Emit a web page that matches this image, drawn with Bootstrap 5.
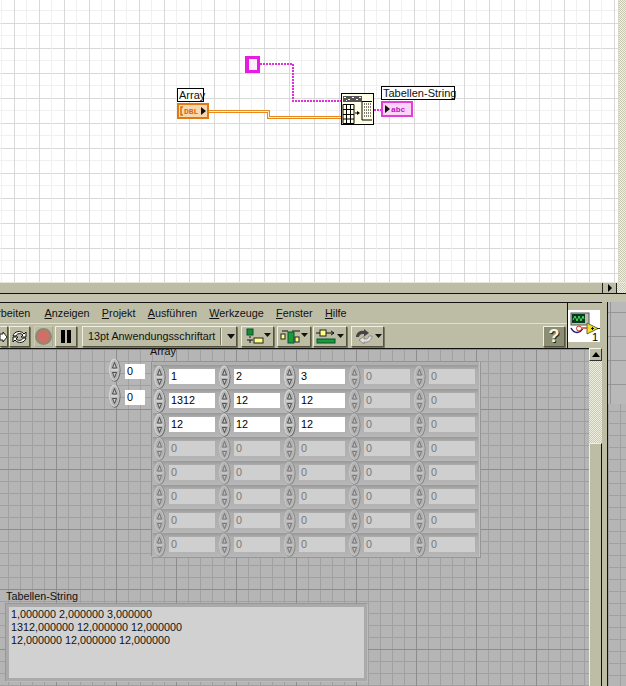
<!DOCTYPE html>
<html lang="de">
<head>
<meta charset="utf-8">
<title>LabVIEW</title>
<link rel="stylesheet" href="https://cdn.jsdelivr.net/npm/bootstrap@5.3.0/dist/css/bootstrap.min.css">
<style>
html,body{margin:0;width:626px;height:686px;overflow:hidden;background:#bdbda6;}
body{font:10.8px/13px "Liberation Sans",Arial,sans-serif;color:#111;}
.diagram-row{height:282px;}
.canvas{position:relative;overflow:hidden;background-color:#fff;
 background-image:linear-gradient(90deg,#d9d9d9 1px,transparent 1px,transparent 12px,#f0f0f0 12px,#f0f0f0 13px,transparent 13px),linear-gradient(#d9d9d9 1px,transparent 1px,transparent 12px,#f0f0f0 12px,#f0f0f0 13px,transparent 13px);
 background-size:25px 25px;background-position:14px 23px;}
.check{background-color:#e8e8d6;background-image:repeating-conic-gradient(#c9c9b2 0 25%,#efefe0 0 50%);background-size:2px 2px;}
.vtrack{width:8px;border-left:1px solid #d8d8c8;}
.hbar{height:12px;background:#bdbda6;border-top:1px solid #e6e6d8;border-bottom:1px solid #111;}
.hbar-track{width:603px;border-right:1px solid #222;}
.hbar-btn{width:14px;border-right:1px solid #222;}
.hgrip{width:9px;}
.sep{height:8px;background:#c4c4ae;}
.win{height:384px;}
.main-col{width:602px;border-top:1px solid #111;}
.head-left{width:568px;border-right:1px solid #111;}
.menu-row{height:21px;gap:12.3px;overflow:hidden;border-bottom:1px solid #e0e0cc;white-space:nowrap;background:#bdbda6;}
.menu-first{margin-left:-22px;margin-right:2px;}
.tool-row{height:24px;background:#bdbda6;padding:2px 2px 0 0;}
.head{border-bottom:1px solid #111;height:46px;}
.tb{height:21px;padding:0;border:1px solid;border-color:#f0f0e2 #55553f #55553f #f0f0e2;border-radius:1px;background:#bdbda6;display:flex;align-items:center;justify-content:center;box-shadow:1px 1px 0 #77775f;}
.gap1{margin-left:1px;}
.gap2{margin-left:2px;}
.gap3{margin-left:3px;}
.gap5{margin-left:5px;}
.w8{width:8px;border-left:0;}
.w21{width:21px;}
.w19{width:19px;box-shadow:none;border-color:#cfcfb8 #a8a890 #a8a890 #cfcfb8;}
.w22{width:22px;}
.w33{width:33px;}
.w34{width:34px;}
.ring{width:155px;justify-content:flex-start;padding-left:5px;white-space:nowrap;}
.ring-sep{margin-left:5px;width:1px;height:17px;background:#77775f;box-shadow:1px 0 0 #e8e8d8;}
.ring-arrow{margin-left:6px;}
.help{background:#8d8d74;font:bold 18px/19px "Liberation Sans",sans-serif;color:#f8f8d8;text-shadow:1px 1px 0 #222;width:22px;}
.icon-area{width:33px;padding:7px 0 0 0;background:#bdbda6;}
.vi-icon{display:block;background:#fff;}
.panel{position:relative;width:589px;height:337px;overflow:hidden;background-color:#b5b5b5;
 background-image:linear-gradient(90deg,#8c8c8c 1px,transparent 1px),linear-gradient(#8c8c8c 1px,transparent 1px),linear-gradient(90deg,#a0a0a0 1px,transparent 1px),linear-gradient(#a0a0a0 1px,transparent 1px);
 background-size:60px 60px,60px 60px,12px 12px,12px 12px;background-position:56px 0,0 0,8px 0,0 0;}
.pscroll{width:13px;margin-top:-1px;}
.up-btn{height:13px;background:#bdbda6;border:1px solid;border-color:#f4f4e8 #333 #333 #f4f4e8;display:flex;align-items:center;justify-content:center;}
.ptrack{height:82px;}
.pthumb{height:243px;background:#bdbda6;border-left:1px solid #efefe0;border-right:1px solid #111;border-top:1px solid #efefe0;}
.tan-strip{width:6px;background:#bdbda6;border-right:1px solid #111;}
.right-win{width:18px;background-color:#b5b5b5;
 background-image:linear-gradient(90deg,#a0a0a0 1px,transparent 1px),linear-gradient(#a0a0a0 1px,transparent 1px);background-size:12px 12px;background-position:0 1px;}
.right-top{height:102px;background-color:#b9b9b9;background-image:linear-gradient(#969696 1px,transparent 1px),linear-gradient(90deg,#969696 1px,transparent 1px);background-size:24px 24px;background-position:0 10px,2px 0;}
/* block diagram nodes */
.wires{position:absolute;left:0;top:0;}
.dlabel{position:absolute;background:#fff;border:1px solid #000;font-size:11px;line-height:12px;padding:0 1px;white-space:nowrap;}
.dl-array{left:177px;top:88px;width:27px;height:14px;}
.dl-str{left:381px;top:86px;width:74px;height:14px;}
.dnode{position:absolute;display:block;}
.dn-arr{left:177px;top:103px;}
.dn-const{left:245px;top:56px;width:15px;height:17px;border:3px solid #e81ce0;border-left-width:4px;background:#fdf0fc;}
.dn-fmt{left:341px;top:93px;}
.dn-str{left:381px;top:101px;}
.tlabel{font:bold 8px "Liberation Mono",monospace;}
/* front panel */
.plabel{position:absolute;line-height:13px;white-space:nowrap;}
.pl-array{left:150px;top:-4px;}
.idx{position:absolute;left:108px;top:9px;}
.idx-row{height:26px;}
.field{width:46px;height:15px;background:#fff;line-height:15px;padding-left:2px;margin:4px 0 0 3px;font-size:10.8px;color:#000;}
.idx-field{width:20px;margin:6px 0 0 4px;}
.off .field{background:#cfcfcf;color:#777;}
.off .spin{opacity:.6;}
.spin{display:block;width:13px;height:24px;flex:none;}
.arr-frame{position:absolute;left:151px;top:12px;width:329px;height:196px;padding:3px 0 0 1px;background:#b0b0b0;border:1px solid;border-color:#939393 #c2c2c2 #c2c2c2 #939393;display:grid;grid-template-columns:repeat(5,65px);grid-auto-rows:24px;box-shadow:1px 1px 0 #969696;}
.ccell{display:flex;background:linear-gradient(#989898,#adadad 4px,#b3b3b3 20px,#b8b8b8);}
.pl-str{left:6px;top:241px;}
.str-box{position:absolute;left:5px;top:254px;width:363px;height:79px;padding:3px;background:#aaa;border:1px solid;border-color:#979797 #bcbcbc #bcbcbc #979797;}
.str-in{height:100%;background:#d1d1d1;padding:1px 0 0 2px;line-height:13px;color:#111;white-space:pre;}
</style>
</head>
<body>
<svg width="0" height="0" class="position-absolute">
 <defs>
  <symbol id="s" viewBox="0 0 13 24">
   <ellipse cx="6.8" cy="12.3" rx="5.7" ry="11.5" fill="#666"/>
   <ellipse cx="6.2" cy="11.8" rx="5.4" ry="11.2" fill="#d2d2d2"/>
   <ellipse cx="6.6" cy="12" rx="4.2" ry="10" fill="#b4b4b4"/>
   <path d="M3 12h7" stroke="#eee" stroke-width="1"/>
   <path d="M6.5 4.5 4.5 10h4zM6.5 19.500 4.500 14.500h4z" fill="#c8c8c8" stroke="#333" stroke-width=".8"/>
  </symbol>
 </defs>
</svg>

<div class="diagram-row d-flex">
 <div class="canvas flex-grow-1">
  <svg class="wires" width="618" height="282">
   <path d="M260 64H293V101H342" fill="none" stroke="#e030d8" stroke-width="2" stroke-dasharray="2 1"/>
   <path d="M374 110H381" fill="none" stroke="#e030d8" stroke-width="2" stroke-dasharray="2 1"/>
   <path d="M209 111.500H268.500V117.500H342" fill="none" stroke="#e8891e" stroke-width="3"/>
   <path d="M209 111.500H268.500V117.500H342" fill="none" stroke="#fff3e0" stroke-width="1"/>
  </svg>
  <div class="dlabel dl-array">Array</div>
  <svg class="dnode dn-arr" width="32" height="16">
   <rect x="1" y="1" width="30" height="14" fill="#f8d8ae" stroke="#e07a14" stroke-width="2"/>
   <path d="M6 4H4V12H6" fill="none" stroke="#d86a08" stroke-width="1.500"/>
   <text class="tlabel" x="7" y="11" fill="#d86a08">DBL</text>
   <path d="M24 4 29 8 24 12Z" fill="#111"/>
  </svg>
  <div class="dnode dn-const"></div>
  <svg class="dnode dn-fmt" width="33" height="33">
   <rect x=".5" y=".5" width="32" height="31" fill="#ffffe8" stroke="#000"/>
   <rect x="2" y="3" width="19" height="6" fill="#555"/>
   <path d="M3 4h2v1h-2zM7 6h2v1h-2zM11 4h2v1h-2zM15 6h2v1h-2zM5 7h1v1h-1zM18 4h2v1h-2z" fill="#fff"/>
   <path d="M2 11.500H13V30.500H2ZM5.500 11.500V30.500M9.500 11.500V30.500M2 16.500H13M2 21.500H13M2 26H13" fill="none" stroke="#000"/>
   <path d="M14 20h3" stroke="#000"/><path d="M16 18 19 20 16 22Z" fill="#000"/>
   <path d="M21 8.500H31M21 8.500V27H31" fill="none" stroke="#000"/>
   <path d="M23 11h7M23 14h7M23 17h7M23 20h7M23 23h7" stroke="#000" stroke-dasharray="1 1"/>
  </svg>
  <div class="dlabel dl-str">Tabellen-String</div>
  <svg class="dnode dn-str" width="32" height="16">
   <rect x="1" y="1" width="30" height="14" fill="#fcd4f8" stroke="#e040d8" stroke-width="2"/>
   <path d="M4 4 9 8 4 12Z" fill="#111"/>
   <text class="tlabel" x="10" y="11" fill="#c010b8">abc</text>
  </svg>
 </div>
 <div class="vtrack check"></div>
</div>

<div class="hbar d-flex">
 <div class="hbar-track"></div>
 <div class="hbar-btn d-flex align-items-center justify-content-center"><svg width="6" height="8"><path d="M1 0 5 4 1 8Z" fill="#000"/></svg></div>
 <div class="hgrip check"></div>
</div>
<div class="sep"></div>

<div class="win d-flex">
 <div class="main-col">
  <div class="head d-flex">
   <div class="head-left">
    <div class="menu-row d-flex align-items-center">
     <span class="menu-first">Bearbeiten</span>
     <span><u>A</u>nzeigen</span>
     <span><u>P</u>rojekt</span>
     <span><u>A</u>usführen</span>
     <span><u>W</u>erkzeuge</span>
     <span><u>F</u>enster</span>
     <span><u>H</u>ilfe</span>
    </div>
    <div class="tool-row d-flex">
     <div class="tb w8"><svg width="7" height="10"><path d="M0 2H3V0L7 5 3 10V8H0Z" fill="#fff" stroke="#222"/></svg></div>
     <div class="tb w21 gap1"><svg width="17" height="16"><path d="M2 7C3 2 10 1 13 5L15 3V8H10L12 6C10 4 6 4 5 7ZM15 9C14 14 7 15 4 11L2 13V8H7L5 10C7 12 11 12 12 9Z" fill="#fff" stroke="#111"/></svg></div>
     <div class="tb w19 ms-1"><svg width="17" height="17"><circle cx="8.500" cy="8.500" r="7.500" fill="#d07064" stroke="#8a8a78" stroke-width="2"/></svg></div>
     <div class="tb w22 gap2"><svg width="12" height="13"><path d="M1 0H5V13H1ZM7 0H11V13H7Z" fill="#000"/></svg></div>
     <div class="tb ring gap5"><span>13pt Anwendungsschriftart</span><span class="ring-sep"></span><svg class="ring-arrow" width="8" height="5"><path d="M0 0H8L4 5Z" fill="#111"/></svg></div>
     <div class="tb w33 ms-1"><svg width="27" height="17"><rect x="3" y="1" width="6" height="6" fill="#1c8a2c" stroke="#053"/><path d="M6 8v2M3 12h6M6 12v3" stroke="#111"/><rect x="10" y="10" width="9" height="5" fill="#ffff80" stroke="#222"/><path d="M20 5H27L23.500 9Z" fill="#111"/></svg></div>
     <div class="tb w34 gap3"><svg width="28" height="17"><path d="M2 3H8M12 3H20" stroke="#111"/><rect x="1" y="6" width="4" height="5" fill="#ffff80" stroke="#222"/><rect x="8" y="4" width="6" height="11" fill="#1c9a34" stroke="#053"/><rect x="15" y="9" width="4" height="5" fill="#ffff80" stroke="#222"/><path d="M21 5H28L24.500 9Z" fill="#111"/></svg></div>
     <div class="tb w34 gap2"><svg width="28" height="17"><rect x="4" y="2" width="6" height="6" fill="#ffff80" stroke="#222"/><path d="M0 5H4M10 5H18M15 3l3 2-3 2" fill="none" stroke="#111"/><rect x="1" y="11" width="18" height="4" fill="#1c9a34" stroke="#053"/><path d="M21 6H28L24.500 10Z" fill="#111"/></svg></div>
     <div class="tb w33 ms-1"><svg width="28" height="17"><path d="M2 9C2 5 6 2 10 3V1L15 5 10 8.500V6C7 5.500 5 7 5 9Z" fill="#444"/><path d="M18 8C18 12 14 15 10 14V16L5 12 10 8.500V11C13 11.500 15 10 15 8Z" fill="#ddd" stroke="#666" stroke-width=".6"/><path d="M21 6H28L24.500 10Z" fill="#111"/></svg></div>
     <div class="tb help ms-auto">?</div>
    </div>
   </div>
   <div class="icon-area">
    <svg class="vi-icon" width="32" height="32">
     <rect width="32" height="32" fill="#fff"/>
     <rect x="3" y="3" width="18" height="12" fill="#bdbdb0" stroke="#555"/>
     <rect x="4" y="4" width="13" height="9" fill="#0a3a1e"/>
     <path d="M5 10 7 6 9 11 11 6 13 11 15 6 16 9" fill="none" stroke="#3fe860"/>
     <path d="M3 18C6 24 12 24 15 18" fill="none" stroke="#1a1a90" stroke-width="1.500"/>
     <circle cx="11" cy="18.500" r="2.500" fill="none" stroke="#c83020"/>
     <path d="M14 18H19" stroke="#e07050" stroke-width="2"/>
     <path d="M19 13 30 18.500 19 24Z" fill="#f0e020" stroke="#665"/>
     <path d="M23 18.500h3M24.500 17v3" stroke="#111"/>
     <path d="M29 18.500H32" stroke="#222"/>
     <text x="24" y="31" font-family="Liberation Sans" font-size="11" fill="#000">1</text>
    </svg>
   </div>
  </div>
  <div class="d-flex">
   <div class="panel">
    <div class="plabel pl-array">Array</div>
    <div class="idx">
     <div class="idx-row d-flex"><svg class="spin"><use href="#s"/></svg><div class="field idx-field">0</div></div>
     <div class="idx-row d-flex"><svg class="spin"><use href="#s"/></svg><div class="field idx-field">0</div></div>
    </div>
    <div class="arr-frame">
     <div class="ccell"><svg class="spin"><use href="#s"/></svg><div class="field">1</div></div>
     <div class="ccell"><svg class="spin"><use href="#s"/></svg><div class="field">2</div></div>
     <div class="ccell"><svg class="spin"><use href="#s"/></svg><div class="field">3</div></div>
     <div class="ccell off"><svg class="spin"><use href="#s"/></svg><div class="field">0</div></div>
     <div class="ccell off"><svg class="spin"><use href="#s"/></svg><div class="field">0</div></div>

     <div class="ccell"><svg class="spin"><use href="#s"/></svg><div class="field">1312</div></div>
     <div class="ccell"><svg class="spin"><use href="#s"/></svg><div class="field">12</div></div>
     <div class="ccell"><svg class="spin"><use href="#s"/></svg><div class="field">12</div></div>
     <div class="ccell off"><svg class="spin"><use href="#s"/></svg><div class="field">0</div></div>
     <div class="ccell off"><svg class="spin"><use href="#s"/></svg><div class="field">0</div></div>

     <div class="ccell"><svg class="spin"><use href="#s"/></svg><div class="field">12</div></div>
     <div class="ccell"><svg class="spin"><use href="#s"/></svg><div class="field">12</div></div>
     <div class="ccell"><svg class="spin"><use href="#s"/></svg><div class="field">12</div></div>
     <div class="ccell off"><svg class="spin"><use href="#s"/></svg><div class="field">0</div></div>
     <div class="ccell off"><svg class="spin"><use href="#s"/></svg><div class="field">0</div></div>

     <div class="ccell off"><svg class="spin"><use href="#s"/></svg><div class="field">0</div></div>
     <div class="ccell off"><svg class="spin"><use href="#s"/></svg><div class="field">0</div></div>
     <div class="ccell off"><svg class="spin"><use href="#s"/></svg><div class="field">0</div></div>
     <div class="ccell off"><svg class="spin"><use href="#s"/></svg><div class="field">0</div></div>
     <div class="ccell off"><svg class="spin"><use href="#s"/></svg><div class="field">0</div></div>

     <div class="ccell off"><svg class="spin"><use href="#s"/></svg><div class="field">0</div></div>
     <div class="ccell off"><svg class="spin"><use href="#s"/></svg><div class="field">0</div></div>
     <div class="ccell off"><svg class="spin"><use href="#s"/></svg><div class="field">0</div></div>
     <div class="ccell off"><svg class="spin"><use href="#s"/></svg><div class="field">0</div></div>
     <div class="ccell off"><svg class="spin"><use href="#s"/></svg><div class="field">0</div></div>

     <div class="ccell off"><svg class="spin"><use href="#s"/></svg><div class="field">0</div></div>
     <div class="ccell off"><svg class="spin"><use href="#s"/></svg><div class="field">0</div></div>
     <div class="ccell off"><svg class="spin"><use href="#s"/></svg><div class="field">0</div></div>
     <div class="ccell off"><svg class="spin"><use href="#s"/></svg><div class="field">0</div></div>
     <div class="ccell off"><svg class="spin"><use href="#s"/></svg><div class="field">0</div></div>

     <div class="ccell off"><svg class="spin"><use href="#s"/></svg><div class="field">0</div></div>
     <div class="ccell off"><svg class="spin"><use href="#s"/></svg><div class="field">0</div></div>
     <div class="ccell off"><svg class="spin"><use href="#s"/></svg><div class="field">0</div></div>
     <div class="ccell off"><svg class="spin"><use href="#s"/></svg><div class="field">0</div></div>
     <div class="ccell off"><svg class="spin"><use href="#s"/></svg><div class="field">0</div></div>

     <div class="ccell off"><svg class="spin"><use href="#s"/></svg><div class="field">0</div></div>
     <div class="ccell off"><svg class="spin"><use href="#s"/></svg><div class="field">0</div></div>
     <div class="ccell off"><svg class="spin"><use href="#s"/></svg><div class="field">0</div></div>
     <div class="ccell off"><svg class="spin"><use href="#s"/></svg><div class="field">0</div></div>
     <div class="ccell off"><svg class="spin"><use href="#s"/></svg><div class="field">0</div></div>
    </div>
    <div class="plabel pl-str">Tabellen-String</div>
    <div class="str-box"><div class="str-in">1,000000 2,000000 3,000000
1312,000000 12,000000 12,000000
12,000000 12,000000 12,000000</div></div>
   </div>
   <div class="pscroll">
    <div class="up-btn"><svg width="8" height="5"><path d="M4 0 8 5H0Z" fill="#000"/></svg></div>
    <div class="ptrack check"></div>
    <div class="pthumb"></div>
   </div>
  </div>
 </div>
 <div class="tan-strip"></div>
 <div class="right-win"><div class="right-top"></div></div>
</div>
</body>
</html>
